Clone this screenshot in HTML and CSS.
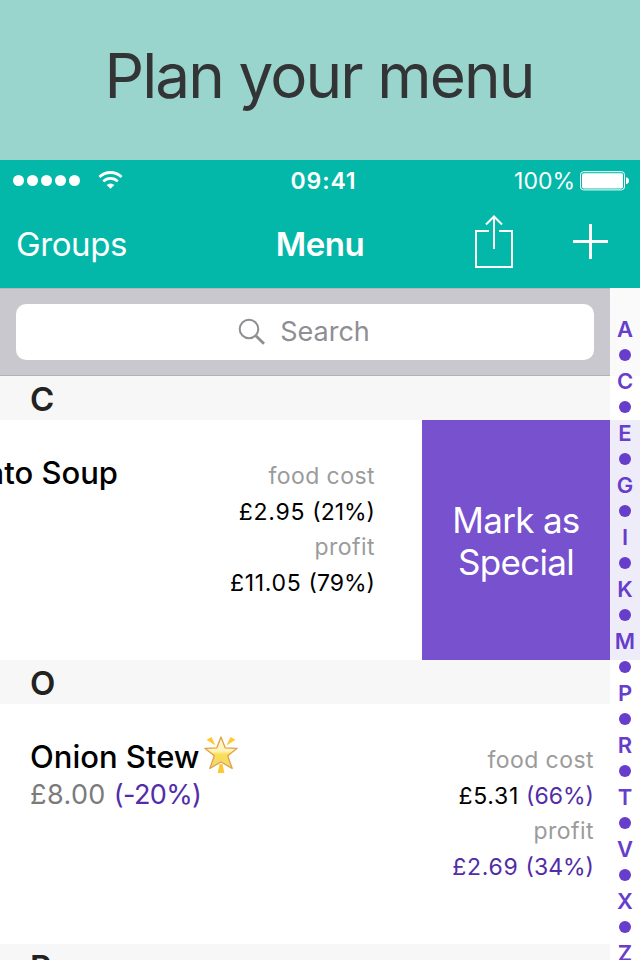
FILE: index.html
```html
<!DOCTYPE html>
<html lang="en">
<head>
    <meta charset="UTF-8">
    <title>Menu</title>
    <link rel="stylesheet" href="styles.css">
</head>
<body>
    <div class="banner">Plan your menu</div>

    <header class="top">
        <div class="status-bar">
            <div class="signal">
                <i></i><i></i><i></i><i></i><i></i>
                <svg class="wifi" width="25" height="19" viewBox="0 0 26 20" fill="none" stroke="#fff">
                    <path d="M1.400 6.300a16.700 16.700 0 0 1 23.200 0" stroke-width="3"/>
                    <path d="M5.400 10.900a10.800 10.800 0 0 1 15.200 0" stroke-width="2.800"/>
                    <path d="M13 18.800l-4-4a5.700 5.700 0 0 1 8 0z" fill="#fff" stroke="none"/>
                </svg>
            </div>
            <div class="time">09:41</div>
            <div class="battery">
                <span>100%</span>
                <svg width="49" height="20" viewBox="0 0 49 20">
                    <rect x=".5" y=".7" width="44" height="18.2" rx="3" fill="none" stroke="#fff"/>
                    <rect x="2" y="2.2" width="41" height="15.2" rx="1.6" fill="#fff"/>
                    <path d="M46 6.3c2 .3 3 1.6 3 3.5s-1 3.200-3 3.500z" fill="#fff"/>
                </svg>
            </div>
        </div>
        <nav class="nav-bar">
            <a class="nav-back">Groups</a>
            <h1 class="nav-title">Menu</h1>
            <div class="nav-actions">
                <svg width="38" height="54" viewBox="0 0 38 54" fill="none" stroke="#fff" stroke-width="2">
                    <path d="M14 16H1v36h36V16H24M19 2v32M11 9.500l8-8 8 8"/>
                </svg>
                <svg class="plus" width="35" height="35" viewBox="0 0 35 35" stroke="#fff" stroke-width="3">
                    <path d="M17.500 0v35M0 17.500h35"/>
                </svg>
            </div>
        </nav>
    </header>

    <div class="content">
        <main class="list">
            <div class="search-bar">
                <div class="search-field">
                    <svg width="28" height="28" viewBox="0 0 28 28" fill="none" stroke="#8e8e93">
                        <circle cx="11" cy="11" r="9.300" stroke-width="2"/>
                        <path d="M17.800 17.800l8.200 8" stroke-width="2.800"/>
                    </svg>
                    <span>Search</span>
                </div>
            </div>

            <h2 class="section">C</h2>
            <div class="row row-swiped">
                <div class="dish">
                    <div class="name">Tomato Soup</div>
                </div>
                <div class="costs">
                    <div class="label">food cost</div>
                    <div class="value">£2.95 <span>(21%)</span></div>
                    <div class="label">profit</div>
                    <div class="value">£11.05 <span>(79%)</span></div>
                </div>
                <div class="action">Mark as<br>Special</div>
            </div>

            <h2 class="section">O</h2>
            <div class="row">
                <div class="dish">
                    <div class="name">
                        <span>Onion Stew</span>
                        <svg class="star" width="34" height="38" viewBox="0 0 34 38">
                            <defs>
                                <linearGradient id="gold" x1="0" y1="0" x2="0" y2="1">
                                    <stop offset="0" stop-color="#fff3cf"/>
                                    <stop offset=".45" stop-color="#fff4b8"/>
                                    <stop offset=".55" stop-color="#fbdf55"/>
                                    <stop offset="1" stop-color="#eed47c"/>
                                </linearGradient>
                            </defs>
                            <path d="M2.500 3.700L7.500 1l4 8.500zM31.500 3.700L26.500 1l-4 8.500zM15.500 28h3l1.800 9h-6.600z" fill="#fdc832"/>
                            <path d="M17 1l4.200 10.800 12 .5-9.500 7.500 4.500 12.700L17 26 5.800 32.500l4.500-12.700-9.500-7.500 12-.5z" fill="url(#gold)" stroke="#dfa048" stroke-width="1.300" stroke-linejoin="round"/>
                        </svg>
                    </div>
                    <div class="price">£8.00 <span class="accent">(-20%)</span></div>
                </div>
                <div class="costs">
                    <div class="label">food cost</div>
                    <div class="value">£5.31 <span class="accent">(66%)</span></div>
                    <div class="label">profit</div>
                    <div class="value accent">£2.69 <span>(34%)</span></div>
                </div>
            </div>

            <h2 class="section">P</h2>
        </main>

        <aside class="index">
            <b>A</b><i></i><b>C</b><i></i><b>E</b><i></i><b>G</b><i></i><b>I</b><i></i><b>K</b><i></i><b>M</b><i></i><b>P</b><i></i><b>R</b><i></i><b>T</b><i></i><b>V</b><i></i><b>X</b><i></i><b>Z</b>
        </aside>
    </div>
</body>
</html>
```
FILE: styles.css
```css
* {
    margin: 0;
    padding: 0;
    box-sizing: border-box;
}

body {
    width: 640px;
    height: 960px;
    overflow: hidden;
    font-family: Inter, "Liberation Sans", sans-serif;
    background: #fff;
    color: #000;
}

svg {
    display: block;
    flex: none;
}

.banner {
    height: 160px;
    padding: 0 2px 9px 0;
    display: flex;
    align-items: center;
    justify-content: center;
    background: #99d4cd;
    color: #333435;
    font-size: 62px;
    letter-spacing: -1.9px;
}

/* status + navigation */
.top {
    height: 128px;
    background: #03b8a9;
    color: #fff;
}

.status-bar {
    height: 40px;
    padding: 1px 11px 0 13px;
    display: grid;
    grid-template-columns: 1fr auto 1fr;
    align-items: center;
    font-size: 23px;
}

.signal {
    display: flex;
    align-items: center;
    gap: 3px;
}

.signal i {
    width: 11px;
    height: 11px;
    border-radius: 50%;
    background: #fff;
}

.wifi {
    margin-left: 15px;
}

.time {
    padding-left: 5px;
    font-weight: 600;
    letter-spacing: 0.9px;
}

.battery {
    display: flex;
    align-items: center;
    justify-content: flex-end;
    gap: 5px;
}

.nav-bar {
    height: 88px;
    padding: 0 16px;
    display: grid;
    grid-template-columns: 1fr auto 1fr;
    align-items: center;
    font-size: 33px;
    letter-spacing: -0.4px;
}

.nav-title {
    font-size: 33px;
    font-weight: 600;
}

.nav-actions {
    margin-right: 16px;
    display: flex;
    align-items: center;
    justify-content: flex-end;
    gap: 60px;
    padding-bottom: 4px;
}

.plus {
    margin-bottom: 2px;
}

/* dish list */
.content {
    display: flex;
}

.list {
    width: 610px;
}

.search-bar {
    height: 88px;
    padding: 15px 16px;
    background: #c9c8ce;
    border-top: 1px solid #b7b6bb;
    border-bottom: 1px solid #b2b1b7;
}

.search-field {
    height: 56px;
    padding: 0 2px 1px 0;
    display: flex;
    align-items: center;
    justify-content: center;
    gap: 14px;
    background: #fff;
    border-radius: 10px;
    color: #8e8e93;
    font-size: 27px;
}

.section {
    height: 44px;
    padding: 0 30px;
    line-height: 46px;
    background: #f7f7f7;
    color: #222;
    font-size: 33px;
    font-weight: 600;
}

.row {
    height: 240px;
    padding: 0 16px 0 30px;
    display: flex;
    justify-content: space-between;
    overflow: hidden;
}

.dish {
    padding-top: 33px;
}

.name {
    height: 39px;
    display: flex;
    align-items: center;
    gap: 4px;
    font-size: 31px;
    font-weight: 500;
    white-space: nowrap;
}

.star {
    margin-bottom: 3px;
}

.price {
    padding-top: 1px;
    line-height: 35px;
    color: #7b7b7b;
    font-size: 27px;
    letter-spacing: 0.4px;
}

.price .accent {
    letter-spacing: -0.6px;
}

.costs {
    padding-top: 39px;
    text-align: right;
    font-size: 23px;
    letter-spacing: 0.45px;
    line-height: 35.5px;
    white-space: nowrap;
}

.value {
    letter-spacing: 0.7px;
}

.value span {
    letter-spacing: 0;
}

.label {
    color: #9b9b9b;
}

.accent {
    color: #512da8;
}

.row-swiped {
    padding: 0;
    justify-content: flex-start;
}

.row-swiped .dish {
    width: 118px;
    display: flex;
    justify-content: flex-end;
}

.row-swiped .costs {
    flex: 1;
    padding-right: 47px;
}

.action {
    width: 188px;
    padding-top: 1px;
    display: flex;
    align-items: center;
    justify-content: center;
    text-align: center;
    background: #7751ce;
    color: #fff;
    font-size: 35px;
    letter-spacing: -0.7px;
    line-height: 42px;
}

.index {
    width: 30px;
    height: 672px;
    padding-top: 28px;
    display: flex;
    flex-direction: column;
    align-items: center;
    overflow: hidden;
    background: linear-gradient(#fafafa 88px, #fff 88px, #fff 132px, #efecfa 132px, #efecfa 372px, #fff 372px);
    color: #673dcb;
}

.index b {
    flex: none;
    font-size: 22px;
    font-weight: 600;
    line-height: 26px;
}

.index i {
    flex: none;
    width: 12px;
    height: 12px;
    margin: 7px 0;
    border-radius: 50%;
    background: #673dcb;
}
```
